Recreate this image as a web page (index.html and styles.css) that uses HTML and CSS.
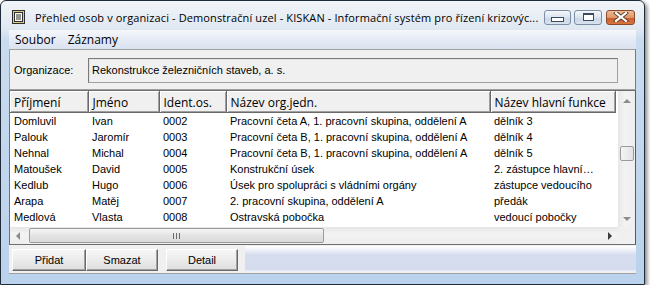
FILE: index.html
```html
<!DOCTYPE html>
<html>
<head>
  <meta charset="UTF-8">
  <title>Přehled osob v organizaci</title>
  <link rel="stylesheet" href="styles.css">
</head>
<body>
  <div class="window">
    <div class="titlebar">
      <svg class="app-icon" width="14" height="14" viewBox="0 0 14 14">
        <rect x="0.5" y="0.5" width="12" height="13" fill="#dccb86" stroke="#2e2e2e"/>
        <rect x="2.5" y="2.5" width="8" height="9" fill="#fdfbf0" stroke="#2e2e2e"/>
        <line x1="4" y1="5" x2="9" y2="5" stroke="#2e2e2e"/>
        <line x1="4" y1="7" x2="9" y2="7" stroke="#2e2e2e"/>
        <line x1="4" y1="9" x2="9" y2="9" stroke="#2e2e2e"/>
      </svg>
      <span class="title">Přehled osob v organizaci - Demonstrační uzel - KISKAN - Informační systém pro řízení krizovýc...</span>
      <div class="controls">
        <div class="ctl ctl-min"><span class="glyph-min"></span></div>
        <div class="ctl ctl-max"><span class="glyph-max"></span></div>
        <div class="ctl ctl-close">
          <svg width="16" height="10" viewBox="0 0 16 10">
            <path d="M3 1 L13 9 M13 1 L3 9" stroke="#5a3a2a" stroke-width="4" stroke-linecap="square"/>
            <path d="M3 1 L13 9 M13 1 L3 9" stroke="#ffffff" stroke-width="2.2" stroke-linecap="square"/>
          </svg>
        </div>
      </div>
    </div>

    <div class="client">
      <div class="menubar">
        <span class="menu-item">Soubor</span>
        <span class="menu-item">Záznamy</span>
      </div>

      <div class="org-panel">
        <label class="org-label">Organizace:</label>
        <div class="org-box">Rekonstrukce železničních staveb, a. s.</div>
      </div>

      <div class="grid">
        <div class="grid-top">
          <div class="grid-data">
            <table class="people">
              <thead>
                <tr>
                  <th class="c1">Příjmení</th>
                  <th class="c2">Jméno</th>
                  <th class="c3">Ident.os.</th>
                  <th class="c4">Název org.jedn.</th>
                  <th class="c5">Název hlavní funkce</th>
                  <th class="c6"></th>
                </tr>
              </thead>
              <tbody>
                <tr><td>Domluvil</td><td>Ivan</td><td>0002</td><td>Pracovní četa A, 1. pracovní skupina, oddělení A</td><td>dělník 3</td><td></td></tr>
                <tr><td>Palouk</td><td>Jaromír</td><td>0003</td><td>Pracovní četa B, 1. pracovní skupina, oddělení A</td><td>dělník 4</td><td></td></tr>
                <tr><td>Nehnal</td><td>Michal</td><td>0004</td><td>Pracovní četa B, 1. pracovní skupina, oddělení A</td><td>dělník 5</td><td></td></tr>
                <tr><td>Matoušek</td><td>David</td><td>0005</td><td>Konstrukční úsek</td><td>2. zástupce hlavní…</td><td></td></tr>
                <tr><td>Kedlub</td><td>Hugo</td><td>0006</td><td>Úsek pro spolupráci s vládními orgány</td><td>zástupce vedoucího</td><td></td></tr>
                <tr><td>Arapa</td><td>Matěj</td><td>0007</td><td>2. pracovní skupina, oddělení A</td><td>předák</td><td></td></tr>
                <tr><td>Medlová</td><td>Vlasta</td><td>0008</td><td>Ostravská pobočka</td><td>vedoucí pobočky</td><td></td></tr>
              </tbody>
            </table>
          </div>
          <div class="vscroll">
            <span class="arrow arrow-up"></span>
            <div class="vtrack"><div class="vthumb"></div></div>
            <span class="arrow arrow-down"></span>
          </div>
        </div>
        <div class="grid-bottom">
          <div class="hscroll">
            <span class="arrow arrow-left"></span>
            <div class="hthumb"><span class="grip"></span></div>
            <div class="htrack"></div>
            <span class="arrow arrow-right"></span>
          </div>
          <div class="corner"></div>
        </div>
      </div>

      <div class="buttonbar">
        <button class="btn btn-add">Přidat</button>
        <button class="btn btn-del">Smazat</button>
        <button class="btn btn-detail">Detail</button>
        <div class="status"></div>
      </div>
    </div>
  </div>
</body>
</html>
```

FILE: styles.css
```css
body {
  margin: 0;
  padding: 0;
  background: #ffffff;
  font-family: "Liberation Sans", Arial, sans-serif;
}

.window {
  box-sizing: border-box;
  width: 645px;
  height: 285px;
  padding: 0 8px 10px 8px;
  border: 1px solid #1f2b38;
  border-radius: 6px 6px 0 0;
  background: linear-gradient(to bottom, #f2f5f9 0, #dfe7f1 28px, #c9dbee 40px, #bad2ec 100%);
  box-shadow: 2px 2px 4px rgba(0, 0, 0, 0.5);
  display: flex;
  flex-direction: column;
}

/* title bar */
.titlebar {
  height: 29px;
  padding-top: 3px;
  box-sizing: border-box;
  display: flex;
  align-items: center;
}

.app-icon {
  margin-left: 3px;
  flex: none;
}

.title {
  margin-left: 9px;
  font-family: "Open Sans", "Noto Sans", sans-serif;
  font-size: 11px;
  letter-spacing: 0.12px;
  color: #000;
  white-space: nowrap;
  flex: 1;
  overflow: hidden;
}

.controls {
  display: flex;
  margin-right: 1px;
}

.ctl {
  height: 15px;
  box-sizing: border-box;
  border: 1px solid #7c8ea6;
  border-radius: 3px;
  display: flex;
  align-items: center;
  justify-content: center;
}

.ctl-min, .ctl-max {
  width: 27px;
  background: linear-gradient(to bottom, #f4f7fb, #dae3ef 50%, #cbd7e6 51%, #d8e2ee);
  margin-right: 3px;
}

.ctl-max {
  width: 28px;
}

.ctl-close {
  width: 29px;
  margin-left: 1px;
  border-color: #8a4a2c;
  background: linear-gradient(to bottom, #eebc96, #e0956a 50%, #c9592c 51%, #d8773f);
}

.glyph-min {
  width: 11px;
  height: 3px;
  margin-top: 4px;
  border: 1px solid #3a4a60;
  background: #fff;
}

.glyph-max {
  width: 9px;
  height: 5px;
  border: 1px solid #3a4a60;
  border-top-width: 2px;
  background: #fff;
}

/* client area */
.client {
  flex: 1;
  background: #f0f0f0;
  display: flex;
  flex-direction: column;
  font-size: 11px;
}

.menubar {
  height: 19px;
  background: linear-gradient(to bottom, #f5f7fb, #e3e9f4 60%, #dbe3f1);
  display: flex;
  align-items: center;
  font-family: "Open Sans", "Noto Sans", sans-serif;
  font-size: 12px;
}

.menu-item {
  padding: 0 0 0 6px;
  margin-right: 6px;
}

.org-panel {
  height: 41px;
  box-sizing: border-box;
  border: 1px solid #a0a0a0;
  border-right-color: #7a7a7a;
  display: flex;
  align-items: flex-start;
  padding-top: 8px;
}

.org-label {
  width: 74px;
  margin-left: 4px;
  margin-top: 6px;
}

.org-box {
  width: 530px;
  height: 25px;
  box-sizing: border-box;
  border: 1px solid #a0a0a0;
  border-top-color: #7a7a7a;
  border-left-color: #7a7a7a;
  box-shadow: inset 1px 1px 0 #e3e3e3;
  background: #f0f0f0;
  padding: 5px 0 0 3px;
}

/* grid */
.grid {
  height: 155px;
  box-sizing: border-box;
  border: 1px solid #6f6f6f;
  border-right-color: #5a5a5a;
  background: #ffffff;
  display: flex;
  flex-direction: column;
}

.grid-top {
  flex: 1;
  display: flex;
  min-height: 0;
}

.grid-data {
  flex: 1;
  overflow: hidden;
}

.people {
  border-collapse: collapse;
  table-layout: fixed;
  width: 608px;
}

.people th {
  height: 21px;
  box-sizing: border-box;
  padding: 2px 0 0 4px;
  background: #f0f0f0;
  font-weight: normal;
  font-size: 12px;
  font-family: "Open Sans", "Noto Sans", sans-serif;
  text-align: left;
  white-space: nowrap;
  border-right: 1px solid #696969;
  border-bottom: 1px solid #696969;
  box-shadow: inset 1px 1px 0 #ffffff, inset -1px -1px 0 #a0a0a0;
}

.people th.c6 {
  border: none;
  box-shadow: none;
  background: #ffffff;
}

.people .c1 { width: 78px; }
.people .c2 { width: 71px; }
.people .c3 { width: 67px; }
.people .c4 { width: 264px; }
.people .c5 { width: 125px; }
.people .c6 { width: 3px; }

.people td {
  height: 16px;
  line-height: 16px;
  padding: 0 0 0 4px;
  white-space: nowrap;
  overflow: hidden;
  font-size: 11px;
}

.vscroll {
  width: 17px;
  background: linear-gradient(to right, #e6e6e6, #f3f3f3 40%, #eeeeee);
  display: flex;
  flex-direction: column;
  align-items: center;
}

.vtrack {
  flex: 1;
  width: 100%;
}

.vthumb {
  width: 14px;
  height: 15px;
  margin: 43px auto 0;
  box-sizing: border-box;
  border: 1px solid #9a9a9a;
  border-radius: 2px;
  background: linear-gradient(to right, #f4f4f4, #e2e2e2);
}

.arrow {
  width: 0;
  height: 0;
  display: block;
  flex: none;
}

.arrow-up {
  margin-top: 8px;
  border-left: 4px solid transparent;
  border-right: 4px solid transparent;
  border-bottom: 4px solid #8c8c8c;
}

.arrow-down {
  margin-bottom: 6px;
  border-left: 4px solid transparent;
  border-right: 4px solid transparent;
  border-top: 4px solid #8c8c8c;
}

.grid-bottom {
  height: 17px;
  display: flex;
}

.hscroll {
  flex: 1;
  display: flex;
  align-items: center;
  background: linear-gradient(to bottom, #e6e6e6, #f3f3f3 40%, #eeeeee);
}

.arrow-left {
  margin-left: 6px;
  border-top: 4px solid transparent;
  border-bottom: 4px solid transparent;
  border-right: 4px solid #8c8c8c;
}

.arrow-right {
  margin-right: 6px;
  border-top: 4px solid transparent;
  border-bottom: 4px solid transparent;
  border-left: 4px solid #3c3c3c;
}

.hthumb {
  width: 295px;
  height: 15px;
  margin-left: 9px;
  box-sizing: border-box;
  border: 1px solid #9a9a9a;
  border-radius: 2px;
  background: linear-gradient(to bottom, #f6f6f6, #e4e4e4 50%, #dadada);
  display: flex;
  align-items: center;
  justify-content: center;
}

.grip {
  width: 7px;
  height: 6px;
  background: repeating-linear-gradient(to right, #6a6a6a 0, #6a6a6a 1px, transparent 1px, transparent 3px);
}

.htrack {
  flex: 1;
}

.corner {
  width: 17px;
  background: #f0f0f0;
}

/* buttons */
.buttonbar {
  flex: 1;
  display: flex;
  align-items: center;
  padding-left: 3px;
  border-bottom: 1px solid #a0a0a0;
}

.btn {
  height: 22px;
  margin-top: 1px;
  padding: 0;
  font-family: "Liberation Sans", Arial, sans-serif;
  font-size: 11px;
  font-weight: normal;
  color: #000;
  background: linear-gradient(to bottom, #f7f7f7, #ebebeb 50%, #dedede);
  border: 1px solid #696969;
  border-top-color: #ffffff;
  border-left-color: #ffffff;
  box-shadow: inset -1px -1px 0 #a0a0a0;
  border-radius: 0;
}

.btn-add { width: 74px; }
.btn-del { width: 72px; }
.btn-detail { width: 72px; margin-left: 8px; }

.status {
  flex: 1;
  align-self: stretch;
  margin: 1px 0 1px 7px;
  background: linear-gradient(to bottom, #ffffff 0, #eef1f9 4px, #d6ddee 9px, #d5dcee 90%, #f4f6fb 100%);
}
```
